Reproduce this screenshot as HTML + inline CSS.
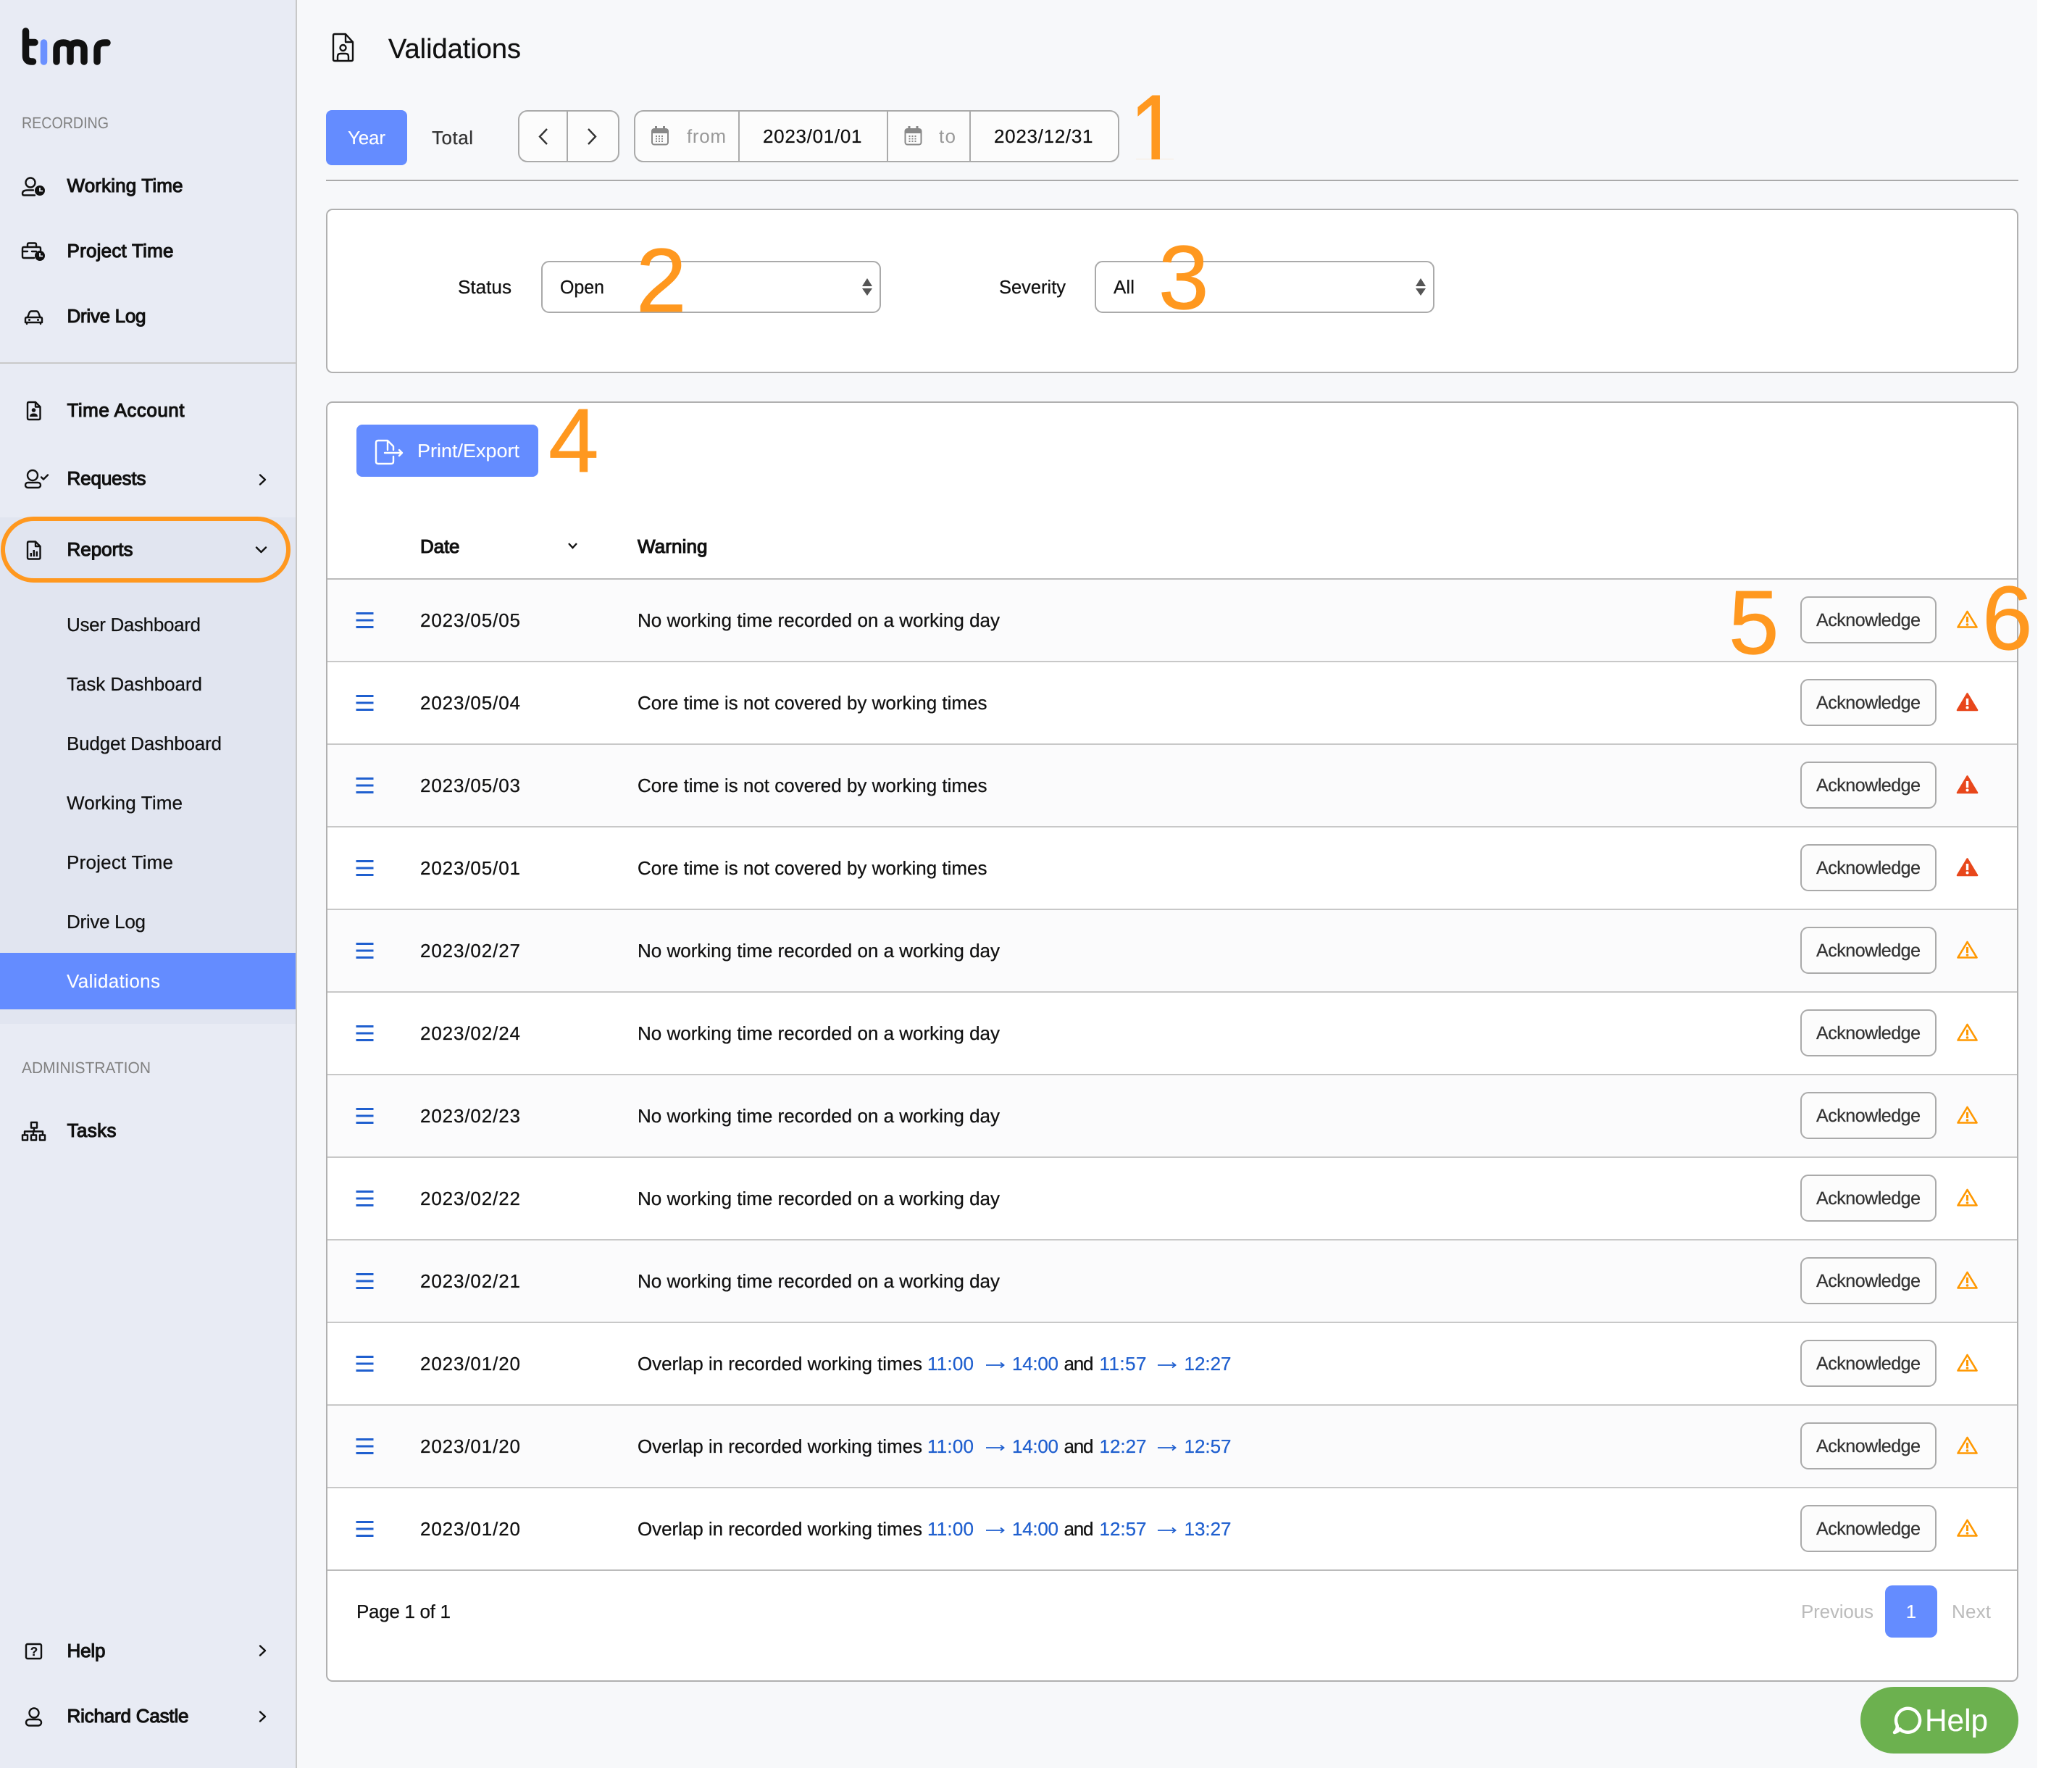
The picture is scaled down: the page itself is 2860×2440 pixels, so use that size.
<!DOCTYPE html>
<html lang="en"><head><meta charset="utf-8"><title>Validations</title>
<style>
html,body{margin:0;padding:0;background:#fff}
svg{display:block}
text{font-family:"Liberation Sans",Arial,sans-serif;font-size:26px;fill:#111;stroke:#111;stroke-width:.25px;text-rendering:geometricPrecision;white-space:pre}
.m{stroke:#111;stroke-width:1.1px}
.g{font-size:22px;fill:#808080;stroke:none}
.w{fill:#fff;stroke:#fff;stroke-width:.1px}
.b{fill:#1f5fcf;stroke:#1f5fcf}
.a{font-size:25px;fill:#333;stroke:#333}
.o{font-size:125px;fill:#ff981f;stroke:#ff981f;stroke-width:.8px}
.n{stroke:none}
.i{fill:none;stroke:#111;stroke-width:2.4;stroke-linecap:round;stroke-linejoin:round}
.btn{fill:#fcfcfc;stroke:#aaa;stroke-width:2}
.ln{fill:#c8c8c8}
</style></head><body>
<svg xmlns="http://www.w3.org/2000/svg" width="2860" height="2440" viewBox="0 0 2860 2440">
<defs>
<clipPath id="c1"><rect x="1540" y="120" width="80" height="100"/></clipPath>
<g id="h"><rect x="491.500" y="46" width="24" height="3" fill="#1f5fcf"/><rect x="491.500" y="55.500" width="24" height="3" fill="#1f5fcf"/><rect x="491.500" y="65" width="24" height="3" fill="#1f5fcf"/></g>
<g id="wo"><path d="M2715.500 45 L2728.500 66.500 H2702.500 Z" fill="none" stroke="#ff9800" stroke-width="2.600" stroke-linejoin="round"/><rect x="2714" y="52" width="3" height="8" fill="#ff9800"/><circle cx="2715.500" cy="63" r="1.800" fill="#ff9800"/></g>
<g id="wr"><path d="M2715.500 44.500 L2729 67 H2702 Z" fill="#e8471b" stroke="#e8471b" stroke-width="2.600" stroke-linejoin="round"/><rect x="2713.800" y="51" width="3.400" height="9" fill="#fff"/><circle cx="2715.500" cy="63.500" r="2" fill="#fff"/></g>
</defs>

<rect width="2812" height="2440" fill="#f7f8fa"/>
<rect x="2812" width="48" height="2440" fill="#fff"/>

<!-- sidebar -->
<rect width="408" height="2440" fill="#e8ebf4"/>
<rect x="408" width="2" height="2440" fill="#c8c8c8"/>
<rect y="714" width="408" height="699" fill="#e1e5f0"/>
<rect y="500" width="408" height="2" fill="#c9c9c9"/>
<rect y="1315" width="408" height="78" fill="#648cff"/>

<!-- logo -->
<g fill="none" stroke-width="9.500" stroke-linecap="round" stroke-linejoin="round">
<path d="M35.500 43 V77 Q35.500 85 44 85 H45.500 M35.500 58.500 H48" stroke="#111"/>
<path d="M60.500 59 V85" stroke="#6a90ff"/>
<path d="M78 85 V68 Q78 59 87.500 59 Q97 59 97 68 V85 M97 68 Q97 59 106.500 59 Q116 59 116 68 V85" stroke="#111"/>
<path d="M134 85 V69 Q134 59 144 59 H148" stroke="#111"/>
</g>

<text class="g" x="30" y="177" textLength="120" lengthAdjust="spacingAndGlyphs">RECORDING</text>

<!-- working time icon -->
<g class="i"><circle cx="42" cy="252" r="6.500"/><path d="M46 262.500 H38 Q31 262.500 31 267 Q31 269.500 33 269.500 H48"/></g>
<circle cx="55" cy="263" r="7" fill="#111"/><path d="M55 259 V263.500 H59" fill="none" stroke="#e8ebf4" stroke-width="1.800"/>
<text class="m" x="92.500" y="265" textLength="160">Working Time</text>

<!-- project icon -->
<g class="i"><path d="M38 340 V337.500 Q38 335.500 40 335.500 H48 Q50 335.500 50 337.500 V340"/><path d="M47 356 H33 Q31 356 31 354 V343 Q31 341 33 341 H54 Q56 341 56 343 V346"/><path d="M31 347 H38 M44 347 H50"/></g>
<circle cx="55" cy="353" r="7" fill="#111"/><path d="M55 349 V353.500 H59" fill="none" stroke="#e8ebf4" stroke-width="1.800"/>
<text class="m" x="92.500" y="355" textLength="147">Project Time</text>

<!-- car icon -->
<g class="i"><path d="M38 438 L40.500 431.500 Q41.500 429.500 43.500 429.500 H50 Q52 429.500 53 431.500 L55.500 438"/><path d="M37 438 H56.500 Q58 438 58 440 V445 H35 V440 Q35 438 37 438 Z M37 445 V447 M56 445 V447"/></g>
<circle cx="40.500" cy="441.500" r="1.500" fill="#111"/><circle cx="52.500" cy="441.500" r="1.500" fill="#111"/>
<text class="m" x="92.500" y="445" textLength="109">Drive Log</text>

<!-- time account -->
<g class="i"><path d="M38 557 Q38 555 40 555 H49 L55.500 561.500 V577 Q55.500 579 53.500 579 H40 Q38 579 38 577 Z M49 555 V561.500 H55.500"/></g>
<circle cx="46.500" cy="566" r="2.800" fill="#111"/><path d="M41 575 Q41 570.500 46.500 570.500 Q52 570.500 52 575 Z" fill="#111"/>
<text class="m" x="92.500" y="575" textLength="162">Time Account</text>

<!-- requests -->
<g class="i"><circle cx="45" cy="656" r="7"/><rect x="35" y="666" width="21" height="7" rx="3.500"/><path d="M57 658.500 L60 661.500 L66 655.500"/><path d="M359 655.500 L366 662 L359 668.500"/></g>
<text class="m" x="92.500" y="669" textLength="109">Requests</text>

<!-- reports -->
<g class="i"><path d="M38 749.500 Q38 747.500 40 747.500 H49 L55.500 754 V769.500 Q55.500 771.500 53.500 771.500 H40 Q38 771.500 38 769.500 Z M49 747.500 V754 H55.500"/><path d="M354 755.500 L360.500 762 L367 755.500"/></g>
<rect x="41.500" y="763" width="2.500" height="5" fill="#111"/><rect x="45.500" y="759" width="2.500" height="9" fill="#111"/><rect x="49.500" y="761" width="2.500" height="7" fill="#111"/>
<text class="m" x="92.500" y="767" textLength="91">Reports</text>
<rect x="4" y="716" width="394" height="85" rx="42.500" fill="none" stroke="#ff981f" stroke-width="6"/>

<text x="92" y="871" textLength="185">User Dashboard</text>
<text x="92" y="953" textLength="187">Task Dashboard</text>
<text x="92" y="1035" textLength="214">Budget Dashboard</text>
<text x="92" y="1117" textLength="160">Working Time</text>
<text x="92" y="1199" textLength="147">Project Time</text>
<text x="92" y="1281" textLength="109">Drive Log</text>
<text class="w" x="92" y="1363" textLength="129">Validations</text>

<text class="g" x="30" y="1481" textLength="178" lengthAdjust="spacingAndGlyphs">ADMINISTRATION</text>
<g class="i"><rect x="43" y="1549" width="8" height="7.500"/><path d="M47 1556.500 V1561 M34 1566 V1561.500 H59 V1566 M46 1561 V1566"/><rect x="31" y="1566.500" width="7" height="7"/><rect x="43" y="1566.500" width="7" height="7"/><rect x="55" y="1566.500" width="7" height="7"/></g>
<text class="m" x="92.500" y="1569" textLength="68">Tasks</text>

<rect x="36" y="2269" width="21" height="20" rx="2" class="i"/>
<text x="47" y="2285" text-anchor="middle" style="font-size:17px;font-weight:700">?</text>
<text class="m" x="92.500" y="2287" textLength="53">Help</text>
<path class="i" d="M359 2271.500 L366 2278 L359 2284.500"/>
<g class="i"><circle cx="47" cy="2364" r="6.500"/><rect x="36" y="2373" width="21" height="8.500" rx="4.200"/><path d="M359 2362.500 L366 2369 L359 2375.500"/></g>
<text class="m" x="92.500" y="2377" textLength="168">Richard Castle</text>

<!-- header -->
<g class="i" stroke-width="2.200"><path d="M460 49 Q460 47 462 47 H477 L487 58 V82 Q487 84 485 84 H462 Q460 84 460 82 Z M477 47 V58 H487"/><circle cx="473.500" cy="66" r="4"/><path d="M466 83 V78 Q466 74 470 74 H477 Q481 74 481 78 V83"/></g>
<text x="536" y="80" textLength="183" style="font-size:38px">Validations</text>

<!-- toolbar -->
<rect x="450" y="152" width="112" height="76" rx="8" fill="#648cff"/>
<text class="w" x="480" y="199" textLength="52">Year</text>
<text x="596" y="199" textLength="57" style="fill:#333;stroke:#333">Total</text>
<rect class="btn" x="716" y="153" width="138" height="70" rx="12"/>
<rect x="782" y="153" width="2" height="70" fill="#aaa"/>
<path d="M755 178 L745 188.500 L755 199 M812 178 L822 188.500 L812 199" fill="none" stroke="#333" stroke-width="2.400"/>
<rect class="btn" x="876" y="153" width="668" height="70" rx="12"/>
<rect x="1019" y="153" width="2" height="70" fill="#aaa"/><rect x="1224" y="153" width="2" height="70" fill="#aaa"/><rect x="1338" y="153" width="2" height="70" fill="#aaa"/>
<rect x="900" y="178" width="22" height="21.500" rx="3" fill="none" stroke="#888" stroke-width="2"/><rect x="900" y="178" width="22" height="6" fill="#888"/><path d="M905.500 174 V180 M916.500 174 V180" stroke="#888" stroke-width="3"/><path d="M905 188 H917 M905 191.500 H917 M905 195 H917" stroke="#888" stroke-width="2" stroke-dasharray="2 2"/>
<text class="n" x="948" y="197" textLength="54" style="fill:#999">from</text>
<text x="1053" y="197" textLength="136.500">2023/01/01</text>
<g transform="translate(349.500 0)"><rect x="900" y="178" width="22" height="21.500" rx="3" fill="none" stroke="#888" stroke-width="2"/><rect x="900" y="178" width="22" height="6" fill="#888"/><path d="M905.500 174 V180 M916.500 174 V180" stroke="#888" stroke-width="3"/><path d="M905 188 H917 M905 191.500 H917 M905 195 H917" stroke="#888" stroke-width="2" stroke-dasharray="2 2"/></g>
<text class="n" x="1296" y="197" textLength="23" style="fill:#999">to</text>
<text x="1372" y="197" textLength="136.500">2023/12/31</text>
<rect x="450" y="248" width="2336" height="2" fill="#aaa"/>

<!-- filter card -->
<rect x="451" y="289" width="2334" height="225" rx="8" fill="#fff" stroke="#b0b0b0" stroke-width="2"/>
<text x="632" y="405" textLength="74" lengthAdjust="spacingAndGlyphs">Status</text>
<rect class="btn" x="748" y="361" width="467" height="70" rx="10" style="fill:#fff"/>
<text x="773" y="405" textLength="61" lengthAdjust="spacingAndGlyphs">Open</text>
<path d="M1197 384 L1204 395 H1190 Z M1190 398 H1204 L1197 408 Z" fill="#555"/>
<text x="1379" y="405" textLength="92" lengthAdjust="spacingAndGlyphs">Severity</text>
<rect class="btn" x="1512" y="361" width="467" height="70" rx="10" style="fill:#fff"/>
<text x="1537" y="405" textLength="29">All</text>
<path d="M1961 384 L1968 395 H1954 Z M1954 398 H1968 L1961 408 Z" fill="#555"/>

<!-- list card -->
<rect x="451" y="555" width="2334" height="1765" rx="8" fill="#fff"/>
<rect x="492" y="586" width="251" height="72" rx="8" fill="#648cff"/>
<g fill="none" stroke="#fff" stroke-width="2.400" stroke-linecap="round" stroke-linejoin="round"><path d="M535 608 H522 Q519 608 519 611 V637 Q519 640 522 640 H540 Q543 640 543 637 V630 M543 621 V616 L535 608 V621"/><path d="M531 625 H555 M551 621 L555 625 L551 629"/></g>
<text class="w" x="576" y="631" textLength="141" lengthAdjust="spacingAndGlyphs">Print/Export</text>

<text class="m" x="580" y="763" textLength="54.500">Date</text>
<path d="M785 750 L790.500 756 L796 750" fill="none" stroke="#111" stroke-width="2.400"/>
<text class="m" x="880" y="763" textLength="96.500">Warning</text>
<rect x="451" y="798" width="2334" height="2" fill="#bbb"/>

<g transform="translate(0 799)"><rect x="451" y="1" width="2333" height="112" fill="#fbfbfc"/><rect class="ln" x="451" y="113" width="2333" height="2"/><use href="#h"/><text x="580" y="66" textLength="138">2023/05/05</text><text x="880" y="66" textLength="500">No working time recorded on a working day</text><rect class="btn" x="2486" y="25" width="186" height="63" rx="10"/><text class="a" x="2507" y="65" textLength="144">Acknowledge</text><use href="#wo"/></g>
<g transform="translate(0 913)"><rect class="ln" x="451" y="113" width="2333" height="2"/><use href="#h"/><text x="580" y="66" textLength="138">2023/05/04</text><text x="880" y="66" textLength="482.500">Core time is not covered by working times</text><rect class="btn" x="2486" y="25" width="186" height="63" rx="10"/><text class="a" x="2507" y="65" textLength="144">Acknowledge</text><use href="#wr"/></g>
<g transform="translate(0 1027)"><rect x="451" y="1" width="2333" height="112" fill="#fbfbfc"/><rect class="ln" x="451" y="113" width="2333" height="2"/><use href="#h"/><text x="580" y="66" textLength="138">2023/05/03</text><text x="880" y="66" textLength="482.500">Core time is not covered by working times</text><rect class="btn" x="2486" y="25" width="186" height="63" rx="10"/><text class="a" x="2507" y="65" textLength="144">Acknowledge</text><use href="#wr"/></g>
<g transform="translate(0 1141)"><rect class="ln" x="451" y="113" width="2333" height="2"/><use href="#h"/><text x="580" y="66" textLength="138">2023/05/01</text><text x="880" y="66" textLength="482.500">Core time is not covered by working times</text><rect class="btn" x="2486" y="25" width="186" height="63" rx="10"/><text class="a" x="2507" y="65" textLength="144">Acknowledge</text><use href="#wr"/></g>
<g transform="translate(0 1255)"><rect x="451" y="1" width="2333" height="112" fill="#fbfbfc"/><rect class="ln" x="451" y="113" width="2333" height="2"/><use href="#h"/><text x="580" y="66" textLength="138">2023/02/27</text><text x="880" y="66" textLength="500">No working time recorded on a working day</text><rect class="btn" x="2486" y="25" width="186" height="63" rx="10"/><text class="a" x="2507" y="65" textLength="144">Acknowledge</text><use href="#wo"/></g>
<g transform="translate(0 1369)"><rect class="ln" x="451" y="113" width="2333" height="2"/><use href="#h"/><text x="580" y="66" textLength="138">2023/02/24</text><text x="880" y="66" textLength="500">No working time recorded on a working day</text><rect class="btn" x="2486" y="25" width="186" height="63" rx="10"/><text class="a" x="2507" y="65" textLength="144">Acknowledge</text><use href="#wo"/></g>
<g transform="translate(0 1483)"><rect x="451" y="1" width="2333" height="112" fill="#fbfbfc"/><rect class="ln" x="451" y="113" width="2333" height="2"/><use href="#h"/><text x="580" y="66" textLength="138">2023/02/23</text><text x="880" y="66" textLength="500">No working time recorded on a working day</text><rect class="btn" x="2486" y="25" width="186" height="63" rx="10"/><text class="a" x="2507" y="65" textLength="144">Acknowledge</text><use href="#wo"/></g>
<g transform="translate(0 1597)"><rect class="ln" x="451" y="113" width="2333" height="2"/><use href="#h"/><text x="580" y="66" textLength="138">2023/02/22</text><text x="880" y="66" textLength="500">No working time recorded on a working day</text><rect class="btn" x="2486" y="25" width="186" height="63" rx="10"/><text class="a" x="2507" y="65" textLength="144">Acknowledge</text><use href="#wo"/></g>
<g transform="translate(0 1711)"><rect x="451" y="1" width="2333" height="112" fill="#fbfbfc"/><rect class="ln" x="451" y="113" width="2333" height="2"/><use href="#h"/><text x="580" y="66" textLength="138">2023/02/21</text><text x="880" y="66" textLength="500">No working time recorded on a working day</text><rect class="btn" x="2486" y="25" width="186" height="63" rx="10"/><text class="a" x="2507" y="65" textLength="144">Acknowledge</text><use href="#wo"/></g>
<g transform="translate(0 1825)"><rect class="ln" x="451" y="113" width="2333" height="2"/><use href="#h"/><text x="580" y="66" textLength="138">2023/01/20</text><text x="880" y="66" textLength="393">Overlap in recorded working times</text><text class="b" x="1280" y="66" textLength="64">11:00</text><path d="M1361 59 H1385 M1381 55.500 L1385.500 59 L1381 62.500" fill="none" stroke="#1f5fcf" stroke-width="1.800"/><text class="b" x="1397" y="66" textLength="64">14:00</text><text x="1468.500" y="66" textLength="41">and</text><text class="b" x="1517.500" y="66" textLength="65">11:57</text><path d="M1598 59 H1622 M1618 55.500 L1622.500 59 L1618 62.500" fill="none" stroke="#1f5fcf" stroke-width="1.800"/><text class="b" x="1634.500" y="66" textLength="65">12:27</text><rect class="btn" x="2486" y="25" width="186" height="63" rx="10"/><text class="a" x="2507" y="65" textLength="144">Acknowledge</text><use href="#wo"/></g>
<g transform="translate(0 1939)"><rect x="451" y="1" width="2333" height="112" fill="#fbfbfc"/><rect class="ln" x="451" y="113" width="2333" height="2"/><use href="#h"/><text x="580" y="66" textLength="138">2023/01/20</text><text x="880" y="66" textLength="393">Overlap in recorded working times</text><text class="b" x="1280" y="66" textLength="64">11:00</text><path d="M1361 59 H1385 M1381 55.500 L1385.500 59 L1381 62.500" fill="none" stroke="#1f5fcf" stroke-width="1.800"/><text class="b" x="1397" y="66" textLength="64">14:00</text><text x="1468.500" y="66" textLength="41">and</text><text class="b" x="1517.500" y="66" textLength="65">12:27</text><path d="M1598 59 H1622 M1618 55.500 L1622.500 59 L1618 62.500" fill="none" stroke="#1f5fcf" stroke-width="1.800"/><text class="b" x="1634.500" y="66" textLength="65">12:57</text><rect class="btn" x="2486" y="25" width="186" height="63" rx="10"/><text class="a" x="2507" y="65" textLength="144">Acknowledge</text><use href="#wo"/></g>
<g transform="translate(0 2053)"><rect class="ln" x="451" y="113" width="2333" height="2" style="fill:#bbb"/><use href="#h"/><text x="580" y="66" textLength="138">2023/01/20</text><text x="880" y="66" textLength="393">Overlap in recorded working times</text><text class="b" x="1280" y="66" textLength="64">11:00</text><path d="M1361 59 H1385 M1381 55.500 L1385.500 59 L1381 62.500" fill="none" stroke="#1f5fcf" stroke-width="1.800"/><text class="b" x="1397" y="66" textLength="64">14:00</text><text x="1468.500" y="66" textLength="41">and</text><text class="b" x="1517.500" y="66" textLength="65">12:57</text><path d="M1598 59 H1622 M1618 55.500 L1622.500 59 L1618 62.500" fill="none" stroke="#1f5fcf" stroke-width="1.800"/><text class="b" x="1634.500" y="66" textLength="65">13:27</text><rect class="btn" x="2486" y="25" width="186" height="63" rx="10"/><text class="a" x="2507" y="65" textLength="144">Acknowledge</text><use href="#wo"/></g>

<!-- pagination -->
<text x="492" y="2233" textLength="130">Page 1 of 1</text>
<text class="n" x="2486" y="2233" textLength="100" style="fill:#bbb">Previous</text>
<rect x="2602" y="2188" width="72" height="72" rx="10" fill="#648cff"/>
<text class="w" x="2638" y="2233" text-anchor="middle">1</text>
<text class="n" x="2694" y="2233" textLength="54" style="fill:#bbb">Next</text>
<rect x="451" y="555" width="2334" height="1765" rx="8" fill="none" stroke="#b0b0b0" stroke-width="2"/>

<!-- help bubble -->
<rect x="2568" y="2328" width="218" height="92" rx="46" fill="#6cb14f"/>
<path d="M2615 2391 Q2621 2389 2622 2386 A16.500 16.500 0 1 0 2618.500 2381 Q2620 2386 2615 2391 Z" fill="none" stroke="#fff" stroke-width="4.500" stroke-linejoin="round"/>
<text class="w" x="2657" y="2389" textLength="87" lengthAdjust="spacingAndGlyphs" style="font-size:43px">Help</text>

<!-- annotations -->
<g clip-path="url(#c1)"><text class="o" transform="translate(1559 231) scale(.85 1)" style="font-size:144px">1</text></g>
<text class="o" x="878" y="430">2</text>
<text class="o" x="1599" y="426">3</text>
<text class="o" x="757" y="651">4</text>
<text class="o" x="2386" y="902">5</text>
<text class="o" x="2736" y="896">6</text>
</svg>
</body></html>
